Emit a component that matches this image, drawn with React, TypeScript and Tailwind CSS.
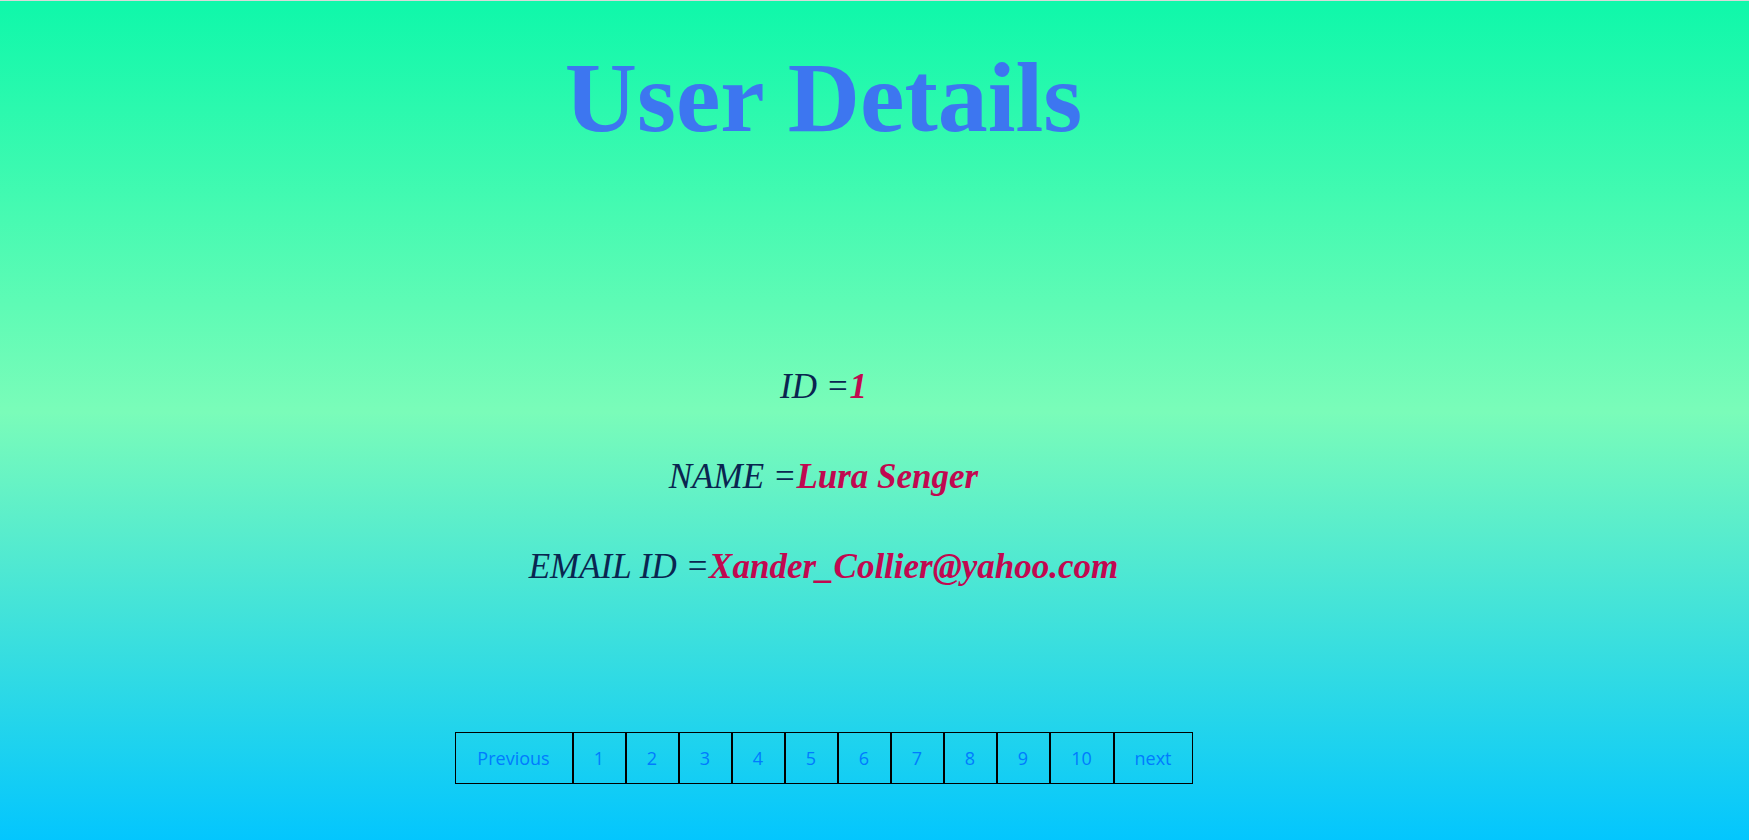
import React from "react";

const pages = ["1", "2", "3", "4", "5", "6", "7", "8", "9", "10"];

function Row({ label, value }: { label: string; value: string }) {
  return (
    <div className="text-[35px] leading-[90px] italic text-center whitespace-nowrap">
      <span className="text-[#0a2550]">{label}</span>
      <span className="font-bold text-[#c10850]">{value}</span>
    </div>
  );
}

export default function App() {
  return (
    <div className="min-h-screen flex flex-col" style={{ fontFamily: '"Liberation Serif", "Times New Roman", serif' }}>
      <div className="h-px bg-[#d9d9d9]" />
      <div className="flex-1 bg-linear-to-b/srgb from-[#0ff8aa] via-[#7afcb9] via-49% to-[#03c6fe] pr-[102px] flex flex-col items-center">
        <h1 className="mt-[47px] text-[100px] leading-none font-bold text-[#3d76f0] whitespace-nowrap">
          User Details
        </h1>
        <div className="mt-[194px] flex flex-col items-center">
          <Row label="ID =" value="1" />
          <Row label="NAME =" value="Lura Senger" />
          <Row label="EMAIL ID =" value="Xander_Collier@yahoo.com" />
        </div>
        <nav
          className="mt-[120px] flex"
          style={{ fontFamily: '"Open Sans", "Noto Sans", sans-serif' }}
        >
          <button className="w-[118px] h-[52px] border border-black text-[18px] text-[#007bff] flex items-center justify-center">
            Previous
          </button>
          {pages.map((p) => (
            <button
              key={p}
              className={
                (p === "10" ? "w-[64px]" : "w-[53px]") +
                " h-[52px] border border-black text-[18px] text-[#007bff] flex items-center justify-center"
              }
            >
              {p}
            </button>
          ))}
          <button className="w-[79px] h-[52px] border border-black text-[18px] text-[#007bff] flex items-center justify-center">
            next
          </button>
        </nav>
      </div>
    </div>
  );
}
